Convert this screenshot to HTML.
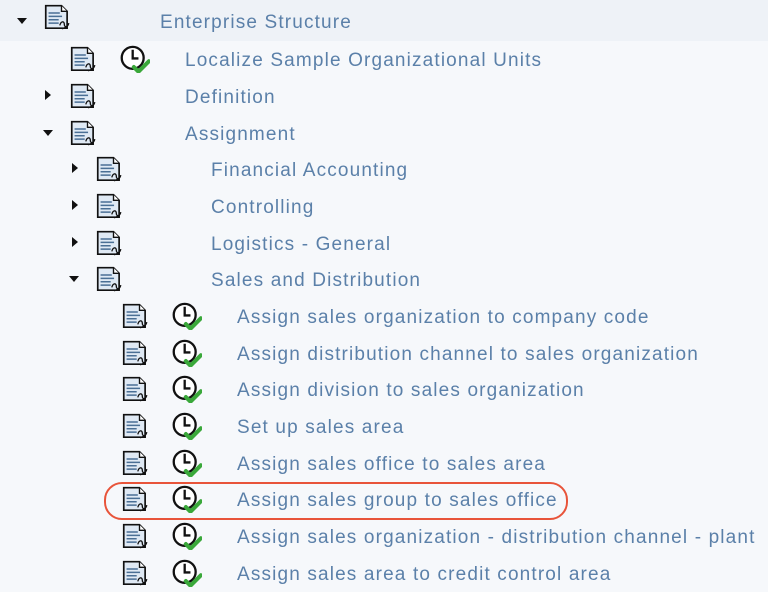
<!DOCTYPE html>
<html><head><meta charset="utf-8"><style>
body{margin:0;width:768px;height:592px;background:#f6f8fb;overflow:hidden;position:relative;font-family:"Liberation Sans",sans-serif}
.top{position:absolute;left:0;top:0;width:768px;height:41px;background:#eef2f7}
.r{position:absolute;height:37px;width:768px}
.t{position:absolute;top:9px;font-size:19px;letter-spacing:1.15px;color:#5b80a9;white-space:nowrap}
.ar{position:absolute;top:12px}
.doc{position:absolute;top:5px}
.clk{position:absolute;top:4px}
.oval{position:absolute;left:104px;top:482px;width:460px;height:34px;border:2px solid #e8543a;border-radius:18px}
</style></head><body>
<div class="top"></div>
<svg width="0" height="0" style="position:absolute">
<defs>
<g id="d"><path d="M1.5 1.5h14l5 5v15h-19z" fill="#dfe9f4" stroke="#111" stroke-width="1.5"/><path d="M15.5 1.5v5h5" fill="#fff" stroke="#111" stroke-width="1.2"/><path d="M4 8h10M4 11h12M4 14h9M4 17h9" stroke="#4a6f95" stroke-width="1.4"/><path d="M14 19c1-4 4-4 4-1s3 3 4-1M16 22c2 0 3-2 5-2" fill="none" stroke="#111" stroke-width="1.2"/></g>
<g id="c"><circle cx="11" cy="11" r="9.5" fill="#fff" stroke="#111" stroke-width="2"/><path d="M11 4v7.5h5" fill="none" stroke="#111" stroke-width="2"/><path d="M12 19l4 4 9-9" fill="none" stroke="#3aa83a" stroke-width="3.5" stroke-linecap="round" stroke-linejoin="round"/></g>
<path id="dn" d="M0 0h10l-5 6z" fill="#111"/>
<path id="rt" d="M0 0v10l6-5z" fill="#111"/>
</defs></svg>

<div class="r" style="top:4px"><svg class="ar" style="left:17px;top:14px" width="10" height="7"><use href="#dn"/></svg><svg class="doc" style="left:44px;top:0px" width="26" height="27" viewBox="0 0 23 24"><use href="#d"/></svg><span class="t" style="left:160px;top:8px">Enterprise Structure</span></div>

<div class="r" style="top:41px"><svg class="doc" style="left:70px" width="26" height="27" viewBox="0 0 23 24"><use href="#d"/></svg><svg class="clk" style="left:120px" width="30" height="28" viewBox="0 0 26 24"><use href="#c"/></svg><span class="t" style="left:185px">Localize Sample Organizational Units</span></div>
<div class="r" style="top:78px"><svg class="ar" style="left:45px" width="7" height="10"><use href="#rt"/></svg><svg class="doc" style="left:70px" width="26" height="27" viewBox="0 0 23 24"><use href="#d"/></svg><span class="t" style="left:185px">Definition</span></div>
<div class="r" style="top:115px"><svg class="ar" style="left:43px;top:15px" width="10" height="7"><use href="#dn"/></svg><svg class="doc" style="left:70px" width="26" height="27" viewBox="0 0 23 24"><use href="#d"/></svg><span class="t" style="left:185px">Assignment</span></div>

<div class="r" style="top:151px"><svg class="ar" style="left:72px" width="7" height="10"><use href="#rt"/></svg><svg class="doc" style="left:96px" width="26" height="27" viewBox="0 0 23 24"><use href="#d"/></svg><span class="t" style="left:211px">Financial Accounting</span></div>
<div class="r" style="top:188px"><svg class="ar" style="left:72px" width="7" height="10"><use href="#rt"/></svg><svg class="doc" style="left:96px" width="26" height="27" viewBox="0 0 23 24"><use href="#d"/></svg><span class="t" style="left:211px">Controlling</span></div>
<div class="r" style="top:225px"><svg class="ar" style="left:72px" width="7" height="10"><use href="#rt"/></svg><svg class="doc" style="left:96px" width="26" height="27" viewBox="0 0 23 24"><use href="#d"/></svg><span class="t" style="left:211px">Logistics - General</span></div>
<div class="r" style="top:261px"><svg class="ar" style="left:69px;top:15px" width="10" height="7"><use href="#dn"/></svg><svg class="doc" style="left:96px" width="26" height="27" viewBox="0 0 23 24"><use href="#d"/></svg><span class="t" style="left:211px">Sales and Distribution</span></div>

<div class="r" style="top:298px"><svg class="doc" style="left:122px" width="26" height="27" viewBox="0 0 23 24"><use href="#d"/></svg><svg class="clk" style="left:172px" width="30" height="28" viewBox="0 0 26 24"><use href="#c"/></svg><span class="t" style="left:237px">Assign sales organization to company code</span></div>
<div class="r" style="top:335px"><svg class="doc" style="left:122px" width="26" height="27" viewBox="0 0 23 24"><use href="#d"/></svg><svg class="clk" style="left:172px" width="30" height="28" viewBox="0 0 26 24"><use href="#c"/></svg><span class="t" style="left:237px">Assign distribution channel to sales organization</span></div>
<div class="r" style="top:371px"><svg class="doc" style="left:122px" width="26" height="27" viewBox="0 0 23 24"><use href="#d"/></svg><svg class="clk" style="left:172px" width="30" height="28" viewBox="0 0 26 24"><use href="#c"/></svg><span class="t" style="left:237px">Assign division to sales organization</span></div>
<div class="r" style="top:408px"><svg class="doc" style="left:122px" width="26" height="27" viewBox="0 0 23 24"><use href="#d"/></svg><svg class="clk" style="left:172px" width="30" height="28" viewBox="0 0 26 24"><use href="#c"/></svg><span class="t" style="left:237px">Set up sales area</span></div>
<div class="r" style="top:445px"><svg class="doc" style="left:122px" width="26" height="27" viewBox="0 0 23 24"><use href="#d"/></svg><svg class="clk" style="left:172px" width="30" height="28" viewBox="0 0 26 24"><use href="#c"/></svg><span class="t" style="left:237px">Assign sales office to sales area</span></div>
<div class="r" style="top:481px"><svg class="doc" style="left:122px" width="26" height="27" viewBox="0 0 23 24"><use href="#d"/></svg><svg class="clk" style="left:172px" width="30" height="28" viewBox="0 0 26 24"><use href="#c"/></svg><span class="t" style="left:237px">Assign sales group to sales office</span></div>
<div class="r" style="top:518px"><svg class="doc" style="left:122px" width="26" height="27" viewBox="0 0 23 24"><use href="#d"/></svg><svg class="clk" style="left:172px" width="30" height="28" viewBox="0 0 26 24"><use href="#c"/></svg><span class="t" style="left:237px">Assign sales organization - distribution channel - plant</span></div>
<div class="r" style="top:555px"><svg class="doc" style="left:122px" width="26" height="27" viewBox="0 0 23 24"><use href="#d"/></svg><svg class="clk" style="left:172px" width="30" height="28" viewBox="0 0 26 24"><use href="#c"/></svg><span class="t" style="left:237px">Assign sales area to credit control area</span></div>
<div class="oval"></div>
</body></html>
